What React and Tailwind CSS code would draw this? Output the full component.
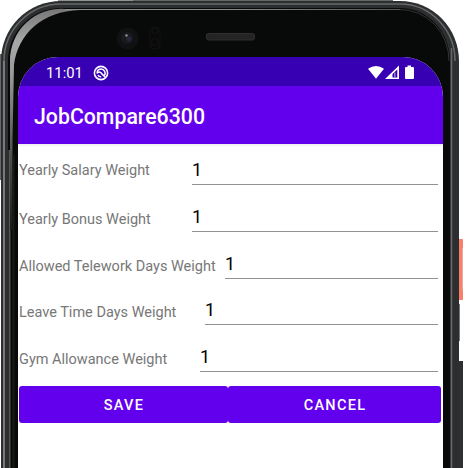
import React from 'react';

const fields = [
  { label: 'Yearly Salary Weight', row: 'h-[41px]', input: 'w-[246px]', gap: 'pt-[18px]' },
  { label: 'Yearly Bonus Weight', row: 'h-[47px]', input: 'w-[246px]', gap: 'pt-[26px]' },
  { label: 'Allowed Telework Days Weight', row: 'h-[47px]', input: 'w-[213px]', gap: 'pt-[25.5px]' },
  { label: 'Leave Time Days Weight', row: 'h-[46px]', input: 'w-[233px]', gap: 'pt-[25px]' },
  { label: 'Gym Allowance Weight', row: 'h-[47px]', input: 'w-[238px]', gap: 'pt-[25.5px]' },
];

function PhoneFrame() {
  return (
    <svg className="absolute inset-0" width="465" height="468" viewBox="0 0 465 468">
      <defs>
        <linearGradient id="shine" x1="0" y1="0" x2="0" y2="1">
          <stop offset="0" stopColor="#777" />
          <stop offset="0.15" stopColor="#a8a8a8" />
          <stop offset="0.3" stopColor="#999" />
          <stop offset="0.65" stopColor="#50514f" />
          <stop offset="1" stopColor="#191b19" />
        </linearGradient>
        <linearGradient id="rail" gradientUnits="userSpaceOnUse" x1="60" y1="0" x2="400" y2="0">
          <stop offset="0" stopColor="#8c908c" />
          <stop offset="0.5" stopColor="#858985" />
          <stop offset="1" stopColor="#555" />
        </linearGradient>
      </defs>
      <rect x="58" y="0" width="75" height="2" fill="#8e958e" />
      <rect x="133" y="0" width="260" height="3" fill="#626862" />
      <rect x="0" y="54" width="2" height="126" fill="#666" />
      <rect x="458" y="239" width="5" height="61" rx="1" fill="#f8806b" />
      <rect x="462" y="248" width="1" height="42" fill="#e9a99d" />
      <rect x="458" y="304" width="2" height="37" fill="#777" />
      <rect x="459" y="361" width="4" height="107" fill="#303030" />
      <path d="M1 480V61A60 60 0 0 1 61 1H400A59 60 0 0 1 459 61V480Z" fill="#2c2e2f" />
      <path d="M4 480V61A57 57 0 0 1 61 4H400A55 57 0 0 1 455 61" fill="none" stroke="#66696b" strokeWidth="1.5" />
      <path d="M8 480V61A53 53 0 0 1 61 8H400A50 53 0 0 1 450 61V480Z" fill="#080909" />
      <path d="M4 61V480" stroke="#777b80" strokeWidth="2" />
      <path d="M9.5 150V480" stroke="#555751" strokeWidth="2" />
      <path d="M10 230V61A51 51.5 0 0 1 65 9L80 10C42 11 18 34 14 65L12.5 140V230Z" fill="url(#shine)" />
      <path d="M65 9.5H400" stroke="url(#rail)" strokeWidth="1" />
      <path d="M400 9.5A49 51 0 0 1 449 61" fill="none" stroke="#333535" strokeWidth="1" />
      <path d="M451.5 48V468" stroke="#686868" strokeWidth="1.5" />
      <path d="M13.5 155V468" stroke="#191b19" strokeWidth="2" />
      <circle cx="127.5" cy="38.5" r="11" fill="#101112" />
      <circle cx="127" cy="38" r="6" fill="#181a1e" />
      <circle cx="129" cy="39" r="2.5" fill="#25283c" />
      <circle cx="126.5" cy="35.5" r="1.2" fill="#939497" />
      <rect x="150" y="27" width="10" height="22" rx="4" fill="#090909" stroke="#131313" />
      <circle cx="155" cy="31" r="3" fill="none" stroke="#131313" />
      <circle cx="155" cy="42" r="3.5" fill="none" stroke="#131313" />
      <rect x="206.5" y="33.5" width="48" height="6.5" rx="2" fill="#242424" stroke="#303030" />
    </svg>
  );
}

function StatusBar() {
  return (
    <div className="flex h-[29px] items-center bg-[#3700b3] pl-[28.5px] text-white">
      <span className="mt-[3px] w-[47px] text-[14.8px] leading-none">11:01</span>
      <svg className="mt-[2px]" width="16" height="16" viewBox="0 0 16 16" fill="none" stroke="#fff">
        <circle cx="8" cy="8" r="6.6" strokeWidth="1.6" />
        <path d="M4.3 8.7A3.9 3.9 0 1 1 10.5 11M4.6 7.5Q7.5 6 9.2 9.2M8.6 8.6L12.3 12.3M5 10Q6 12 8.2 11.8" strokeWidth="1.5" />
      </svg>
      <svg className="ml-auto mr-[28px] mt-[2px]" width="47" height="15" viewBox="0 0 47 15" fill="#fff">
        <path d="M0 3.8Q8 -2 16 3.8L8 13.7Z" />
        <path d="M17 14L31 .5V14Z" />
        <path d="M24.5 9L29.3 4.5V12.5H24.5Z" fill="#3700b3" />
        <path d="M26.3 7.5H27.4V12.5H26.3Z" fill="#b8a4e4" />
        <path d="M39.5 .5H43V2H45Q46 2 46 3V13Q46 14 45 14H38Q37 14 37 13V3Q37 2 38 2H39.5Z" />
      </svg>
    </div>
  );
}

function Field({ field }) {
  return (
    <div className={`flex justify-between ${field.row}`}>
      <label className={`whitespace-nowrap text-[14.5px] leading-[17px] text-[#777] ${field.gap}`}>{field.label}</label>
      <div className={`flex items-end border-b border-[#929292] pb-[5px] pl-[0.5px] text-[18px] leading-[18px] text-black ${field.input}`}>1</div>
    </div>
  );
}

export default function App() {
  return (
    <main className="relative h-[468px] w-[465px] overflow-hidden bg-white font-['Roboto',sans-serif]">
      <PhoneFrame />
      <div className="relative pl-[17.5px] pr-[22px] pt-[57px]">
        <div className="h-[411px] overflow-hidden rounded-t-[40px] bg-white">
          <StatusBar />
          <header className="flex h-[58px] items-center bg-[#6200ee] pl-[16.5px] pt-[3px] text-[21.3px] font-medium text-white">JobCompare6300</header>
          <div className="h-[3px] bg-gradient-to-b from-[#eeeeec] to-white" />
          <section className="-mt-[3px] pb-[14px] pl-[1.5px] pr-[5.5px]">
            {fields.map((field) => <Field key={field.label} field={field} />)}
          </section>
          <div className="flex pl-[1.5px] pr-[2px]">
            <button className="h-[37px] w-[209px] rounded-[3px] bg-[#6200ee] pl-px pt-[2px] text-[14.5px] font-medium tracking-[1.3px] text-white">SAVE</button>
            <button className="h-[37px] w-[213px] rounded-[3px] bg-[#6200ee] pl-px pt-[2px] text-[14.5px] font-medium tracking-[1.3px] text-white">CANCEL</button>
          </div>
        </div>
      </div>
    </main>
  );
}
